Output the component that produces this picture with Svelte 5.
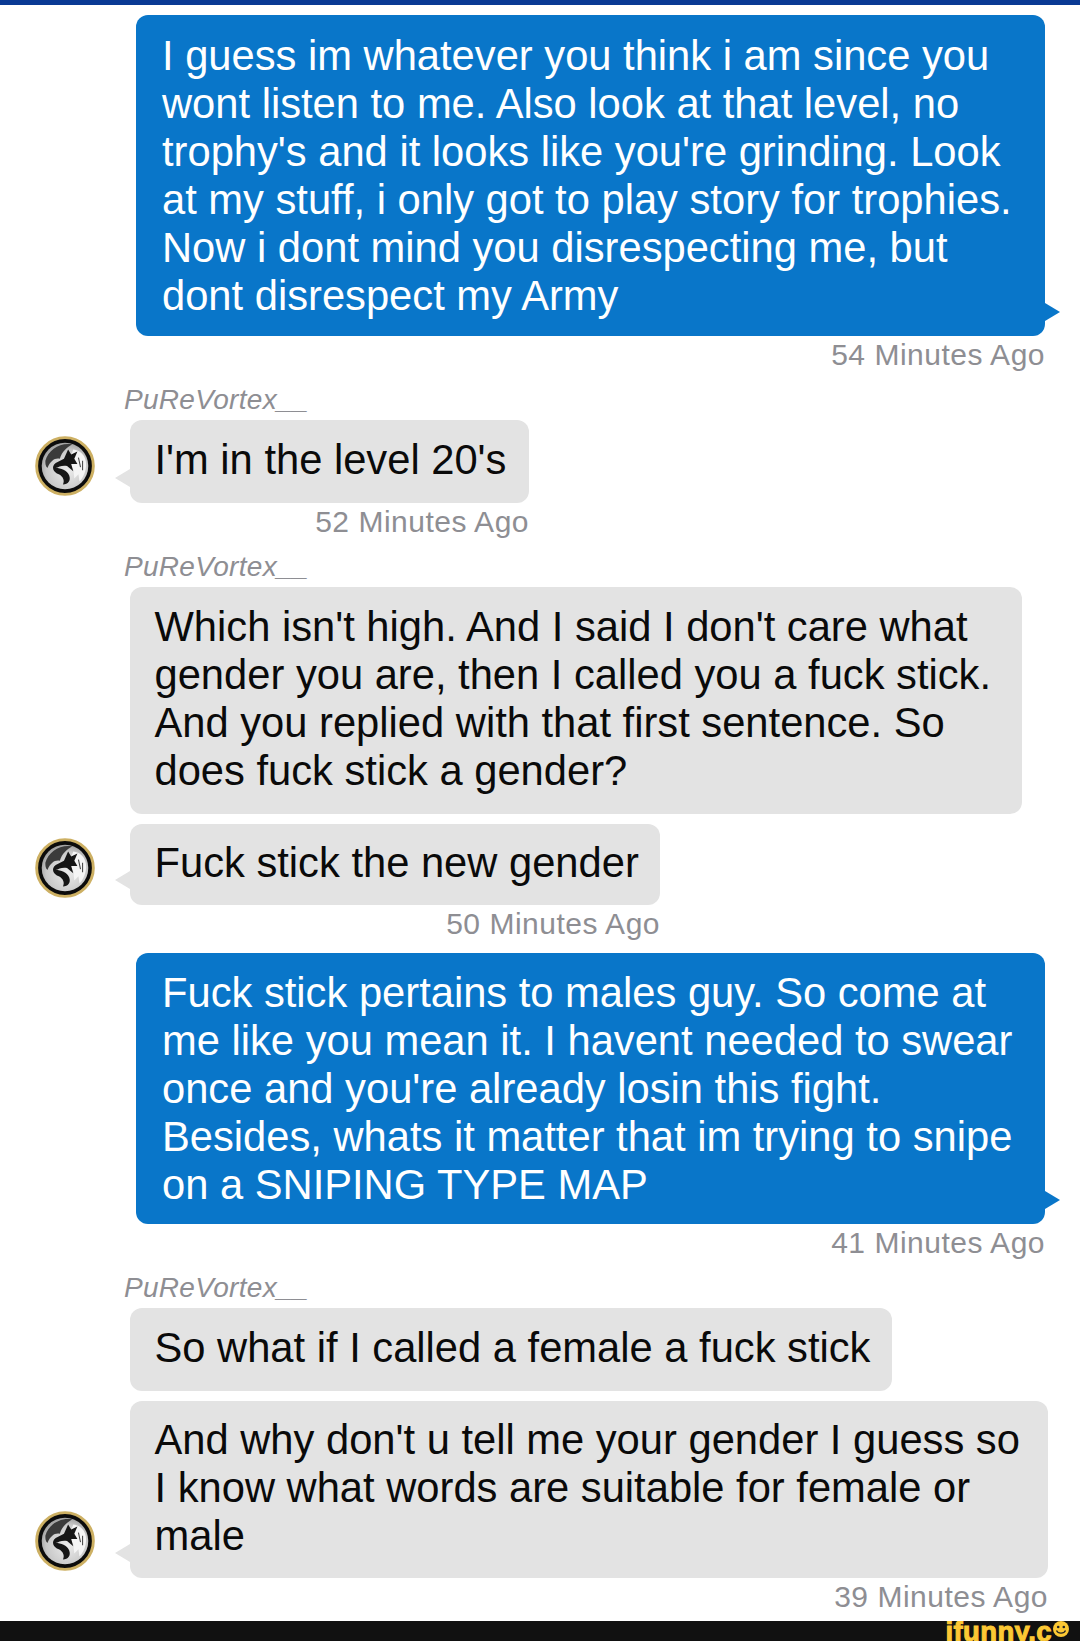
<script>
	const messages = [
		{ mine: true, width: 909, pad: 16.5, time: '54 Minutes Ago', lines: ['I guess im whatever you think i am since you', 'wont listen to me. Also look at that level, no', "trophy's and it looks like you're grinding. Look", 'at my stuff, i only got to play story for trophies.', 'Now i dont mind you disrespecting me, but', 'dont disrespect my Army'] },
		{ name: 'PuReVortex__', avatar: true, width: 399, pad: 17.5, time: '52 Minutes Ago', lines: ["I'm in the level 20's"] },
		{ name: 'PuReVortex__', width: 892, pad: 17.5, lines: ["Which isn't high. And I said I don't care what", 'gender you are, then I called you a fuck stick.', 'And you replied with that first sentence. So', 'does fuck stick a gender?'] },
		{ avatar: true, width: 530, pad: 16.5, time: '50 Minutes Ago', lines: ['Fuck stick the new gender'] },
		{ mine: true, width: 909, pad: 15.5, time: '41 Minutes Ago', lines: ['Fuck stick pertains to males guy. So come at', 'me like you mean it. I havent needed to swear', "once and you're already losin this fight.", 'Besides, whats it matter that im trying to snipe', 'on a SNIPING TYPE MAP'] },
		{ name: 'PuReVortex__', width: 762, pad: 17.5, lines: ['So what if I called a female a fuck stick'] },
		{ avatar: true, width: 918, pad: 16.5, time: '39 Minutes Ago', lines: ["And why don't u tell me your gender I guess so", 'I know what words are suitable for female or', 'male'] }
	];
</script>

<div class="page">
	<div class="topbar"></div>
	<div class="thread">
		{#each messages as m, i}
			<div class="msg" class:mine={m.mine} class:named={m.name}>
				{#if m.name}
					<div class="name">{m.name}</div>
				{/if}
				<div class="row">
					{#if m.avatar}
						<svg class="avatar" viewBox="0 0 58 58" aria-hidden="true">
							<defs>
								<radialGradient id="metal-{i}" cx="0.55" cy="0.6" r="0.7">
									<stop offset="0" stop-color="#ececec" />
									<stop offset="0.65" stop-color="#c8c8c8" />
									<stop offset="1" stop-color="#858585" />
								</radialGradient>
							</defs>
							<circle cx="29" cy="29" r="27.4" fill="#0c0c0c" stroke="#cdb063" stroke-width="2.8" />
							<circle cx="29" cy="29" r="22.5" fill="url(#metal-{i})" />
							<path d="M10 24 C13 13 24 6 36 8 C31 11 26 15 24 22 C19 21 15 24 12 31 C10 29 10 27 10 24 Z" fill="#3b3b3b" />
							<path d="M37 13 C46 14 51 22 49 32 C48 37 46 41 43 44 L42 37 L38 41 L37 32 L32 26 Z" fill="#f5f5f5" />
							<path d="M20 26 L28 22 L32 13 L35 18 L41 15 L38 22 L41 27 L35 27 L37 34 L31 29 C26 28 23 30 20 31 C25 31 31 33 33 38 C35 43 32 47 27 47 C29 43 27 39 23 37 C18 35 15 30 20 26 Z" fill="#161616" />
							<path d="M42 21 L44 30 M46 24 L46 33" stroke="#444" stroke-width="1" fill="none" />
						</svg>
					{/if}
					<div class="bubble" style="width: {m.width}px; padding-block: {m.pad}px;">
						{#each m.lines as line}
							<div class="line">{line}</div>
						{/each}
					</div>
				</div>
				{#if m.time}
					<div class="time" style="width: {m.width}px">{m.time}</div>
				{/if}
			</div>
		{/each}
	</div>
	<div class="footer">
		<span class="logo">ifunny.c</span>
		<svg class="smiley" viewBox="0 0 16 16" aria-hidden="true">
			<circle cx="8" cy="8" r="8" fill="#fcc834" />
			<circle cx="5.2" cy="6" r="1.3" fill="#222" />
			<circle cx="10.8" cy="6" r="1.3" fill="#222" />
			<path d="M3.5 9.5 C5 13 11 13 12.5 9.5" fill="none" stroke="#222" stroke-width="1.3" />
		</svg>
	</div>
</div>

<style>
	:global(body) {
		margin: 0;
		background: #fff;
	}

	.page {
		width: 1080px;
		height: 1641px;
		overflow: hidden;
		display: flex;
		flex-direction: column;
		font-family: "Liberation Sans", Arial, sans-serif;
	}

	.topbar {
		height: 5px;
		background: #0a3a94;
	}

	.thread {
		flex: 1;
		padding-top: 10px;
		display: flex;
		flex-direction: column;
		gap: 10px;
	}

	.msg {
		display: flex;
		flex-direction: column;
		padding-left: 130px;
	}

	.msg.mine {
		padding-left: 136px;
	}

	.msg.named {
		margin-top: -4px;
	}

	.name {
		margin-left: -6px;
		height: 40px;
		line-height: 40px;
		font-size: 28px;
		font-style: italic;
		letter-spacing: 0.3px;
		color: #8e8e93;
	}

	.row {
		position: relative;
	}

	.avatar {
		position: absolute;
		left: -95px;
		bottom: 7px;
		width: 60px;
		height: 60px;
	}

	.bubble {
		position: relative;
		box-sizing: border-box;
		padding-left: 24.5px;
		border-radius: 12px;
		background: #e3e3e3;
		color: #0a0a0a;
		font-size: 41.7px;
		line-height: 48px;
		white-space: nowrap;
	}

	.line {
		position: relative;
		top: -2px;
	}

	.mine .line {
		top: 0;
	}

	.bubble::before {
		content: "";
		position: absolute;
		left: -15px;
		bottom: 16px;
		border-style: solid;
		border-width: 9px 15px 9px 0;
		border-color: transparent #e3e3e3 transparent transparent;
	}

	.msg:not(:has(.avatar)) .bubble::before {
		display: none;
	}

	.mine .bubble {
		background: #0976c9;
		color: #fff;
		padding-left: 26px;
	}

	.mine .bubble::before {
		display: block !important;
		left: auto;
		right: -15px;
		bottom: 15px;
		border-width: 9px 0 9px 15px;
		border-color: transparent transparent transparent #0976c9;
	}

	.time {
		height: 38px;
		line-height: 38px;
		text-align: right;
		font-size: 30px;
		letter-spacing: 0.5px;
		color: #8e8e93;
	}

	.footer {
		height: 20px;
		background: #111;
		display: flex;
		justify-content: flex-end;
		align-items: flex-start;
		padding-right: 11px;
		overflow: hidden;
	}

	.logo {
		font-weight: 700;
		font-size: 27.5px;
		line-height: 20px;
		padding-top: 1px;
		margin-right: 1px;
		letter-spacing: 0.4px;
		color: #fcc834;
		-webkit-text-stroke: 1px #fcc834;
	}

	.smiley {
		width: 16px;
		height: 16px;
		flex: none;
	}
</style>
